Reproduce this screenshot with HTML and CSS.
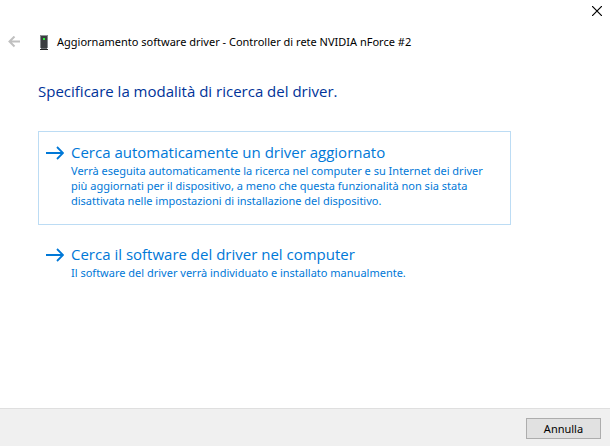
FILE: index.html
```html
<!DOCTYPE html>
<html lang="it">
<head>
  <meta charset="UTF-8">
  <meta name="viewport" content="width=device-width, initial-scale=1.0">
  <title>Aggiornamento software driver</title>
  <link rel="stylesheet" href="styles.css">
</head>
<body>
<div class="titlebar">
  <button type="button" class="close" aria-label="Chiudi">
    <svg width="10" height="10" viewBox="0 0 10 10"><path d="M0 0L10 10M10 0L0 10" stroke="#000" stroke-width="1.2"/></svg>
  </button>
</div>

<header class="header">
  <button type="button" class="back" aria-label="Indietro" disabled>
    <svg width="13" height="12" viewBox="0 0 13 12" fill="none" stroke="#c0c0c0" stroke-width="2"><path d="M12 5.500H1.500M6.500 0.500L1.500 5.500L6.500 10.500"/></svg>
  </button>
  <svg class="device" width="8" height="15" viewBox="0 0 8 15">
    <rect x="0" y="0" width="8" height="1" fill="#8f9498"/>
    <rect x="0" y="0" width="1" height="13" fill="#85898c"/>
    <rect x="7" y="0" width="1" height="13" fill="#85898c"/>
    <rect x="1" y="1" width="6" height="12" fill="#3b3d3f"/>
    <rect x="3" y="3" width="2" height="2" fill="#2df53c"/>
    <rect x="1" y="13" width="6" height="1" fill="#6a6e70"/>
    <rect x="0" y="14" width="8" height="1" fill="#222"/>
  </svg>
  <span class="caption">Aggiornamento software driver - Controller di rete NVIDIA nForce #2</span>
</header>

<main class="content">
  <h1>Specificare la modalità di ricerca del driver.</h1>

  <button type="button" class="option selected">
    <svg class="arrow" width="18" height="14" viewBox="0 0 18 14" fill="none" stroke="#0078d7" stroke-width="1.8"><path d="M0 7H17M11 1L17 7L11 13"/></svg>
    <span class="text">
      <span class="name">Cerca automaticamente un driver aggiornato</span>
      <span class="note">Verrà eseguita automaticamente la ricerca nel computer e su Internet dei driver più aggiornati per il dispositivo, a meno che questa funzionalità non sia stata disattivata nelle impostazioni di installazione del dispositivo.</span>
    </span>
  </button>

  <button type="button" class="option">
    <svg class="arrow" width="18" height="14" viewBox="0 0 18 14" fill="none" stroke="#0078d7" stroke-width="1.8"><path d="M0 7H17M11 1L17 7L11 13"/></svg>
    <span class="text">
      <span class="name">Cerca il software del driver nel computer</span>
      <span class="note">Il software del driver verrà individuato e installato manualmente.</span>
    </span>
  </button>
</main>

<footer class="footer">
  <button type="button" class="cancel">Annulla</button>
</footer>
</body>
</html>
```

FILE: styles.css
```css
* {
  box-sizing: border-box;
}
body {
  display: flex;
  flex-direction: column;
  min-height: 100vh;
  margin: 0;
  background: white;
  font-family: "Noto Sans", "Open Sans", sans-serif;
  font-size: 11px;
  color: #000;
}
button {
  font: inherit;
  border: none;
  background: none;
  padding: 0;
}
svg {
  display: block;
  flex: none;
}
.titlebar {
  display: flex;
  justify-content: flex-end;
  padding: 6px 8px 0 0;
}
.close {
  cursor: pointer;
}
.header {
  display: flex;
  align-items: center;
  margin-top: 16px;
  padding-left: 8px;
  height: 20px;
}
.device {
  margin: 0 9px 0 19px;
}
.caption {
  line-height: 20px;
}
.content {
  flex: 1;
  padding: 28px 38px 16px;
}
h1 {
  margin: 0 0 28px;
  font-family: "Open Sans", sans-serif;
  font-size: 15px;
  font-weight: normal;
  line-height: 23px;
  color: #003399;
}
.option {
  display: flex;
  align-items: flex-start;
  width: 100%;
  max-width: 473px;
  margin-bottom: 8px;
  padding: 9px 16px 16px 7px;
  border: 1px solid transparent;
  text-align: left;
  color: #0078d7;
  cursor: pointer;
}
.option.selected {
  border-color: #bcdcf4;
}
.arrow {
  margin: 5px 7px 0 0;
}
.name {
  display: block;
  font-family: "Open Sans", sans-serif;
  font-size: 15px;
  line-height: 22px;
}
.note {
  display: block;
  line-height: 15px;
}
.footer {
  display: flex;
  justify-content: flex-end;
  padding: 9px 9px 7px;
  border-top: 1px solid #dfdfdf;
  background: #f0f0f0;
}
.cancel {
  width: 75px;
  height: 21px;
  border: 1px solid #adadad;
  background: #e1e1e1;
  cursor: pointer;
}
```
